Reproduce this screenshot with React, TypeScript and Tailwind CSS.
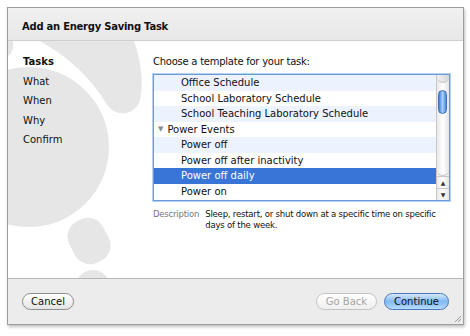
import React from "react";

const font = { fontFamily: '"DejaVu Sans", Verdana, sans-serif' };

function Watermark() {
  return (
    <svg className="absolute inset-0" width="454" height="237" viewBox="0 0 454 237">
      <g fill="#e6e6e6" transform="translate(-8 -41)">
        <circle cx="29" cy="147" r="80" />
        <path d="M40 41 L134 41 C141 60 144 84 140 100 C136 114 120 117 111 109 C106 104 104 100 100 94 C85 72 64 55 40 41 Z" />
        <path d="M8 41 L13 41 C14 48 12 54 8 56 Z" />
        <rect x="70" y="218" width="38" height="46" rx="17" transform="rotate(-28 89 241)" />
        <circle cx="93" cy="287" r="17" />
      </g>
    </svg>
  );
}

function Scrollbar() {
  return (
    <div className="w-[13px] h-full border-l border-[#c8c8c8] bg-gradient-to-r from-[#e9e9e9] via-[#ffffff] to-[#e3e3e3] flex flex-col">
      <div className="h-[8px] rounded-b-full border-b border-[#c4c4c4] bg-gradient-to-r from-[#f0f0f0] to-[#d8d8d8]" />
      <div className="flex-1 relative">
        <div className="absolute left-[1px] top-[7px] w-[9px] h-[24px] rounded-full border border-[#3f6fb0] bg-gradient-to-r from-[#3d7fd6] via-[#a9d0fb] to-[#4a8ae0]" />
        <div className="absolute left-0 right-0 bottom-0 h-[8px] rounded-b-full border-b border-[#c4c4c4]" />
      </div>
      <div className="h-[12px] flex items-center justify-center border-t border-[#c8c8c8] text-[6px] text-[#333]">▲</div>
      <div className="h-[12px] flex items-center justify-center border-t border-[#c8c8c8] text-[6px] text-[#333]">▼</div>
    </div>
  );
}

export default function App() {
  const rows = [
    { label: "Office Schedule", indent: true },
    { label: "School Laboratory Schedule", indent: true },
    { label: "School Teaching Laboratory Schedule", indent: true },
    { label: "Power Events", group: true },
    { label: "Power off", indent: true },
    { label: "Power off after inactivity", indent: true },
    { label: "Power off daily", indent: true, selected: true },
    { label: "Power on", indent: true },
  ];
  const steps = ["Tasks", "What", "When", "Why", "Confirm"];

  return (
    <div className="w-[470px] h-[336px] bg-white pt-[7px] pl-[7px]" style={font}>
      <div className="w-[457px] h-[318px] flex flex-col border border-[#9d9d9d] shadow-[1px_2px_3px_rgba(0,0,0,0.25)] text-[10px] text-[#111]">
        <div className="h-[33px] bg-gradient-to-b from-[#f0f0f0] to-[#e8e8e8] border-b border-[#cfcfcf] flex items-end pl-[14px] pb-[6px]">
          <span className="font-bold text-[10px] tracking-[-0.25px]">Add an Energy Saving Task</span>
        </div>

        <div className="flex-1 relative bg-white overflow-hidden flex">
          <Watermark />
          <div className="relative w-[145px] pl-[15px] pt-[14px] flex flex-col gap-[6.5px]">
            {steps.map((s, i) => (
              <div key={s} className={`h-[13px] leading-[13px] ${i === 0 ? "font-bold" : ""}`}>
                {s}
              </div>
            ))}
          </div>
          <div className="relative flex-1 pt-[14px] pr-[13px]">
            <div className="h-[13px] leading-[13px] tracking-[-0.25px]">Choose a template for your task:</div>
            <div className="mt-[6px] h-[127px] border border-[#6d9ad8] shadow-[0_0_0_1px_#b7cff1] flex">
              <div className="flex-1 flex flex-col">
                {rows.map((r, i) => (
                  <div
                    key={r.label}
                    className={`h-[15.5px] flex items-center ${
                      r.selected ? "bg-[#3875d7] text-white" : i % 2 === 0 ? "bg-[#edf3fe]" : "bg-white"
                    } ${r.group ? "pl-[4px]" : "pl-[27px]"}`}
                  >
                    {r.group && <span className="text-[7px] text-[#8a8a8a] mr-[4px]">▼</span>}
                    {r.label}
                  </div>
                ))}
              </div>
              <Scrollbar />
            </div>
            <div className="mt-[8px] flex gap-[6px] leading-[11px] text-[8.5px] tracking-[-0.2px]">
              <span className="text-[#777]">Description</span>
              <span className="whitespace-nowrap">
                Sleep, restart, or shut down at a specific time on specific
                <br />
                days of the week.
              </span>
            </div>
          </div>
        </div>

        <div className="h-[46px] bg-[#ececec] border-t border-[#b5b5b5] flex items-center px-[14px] relative">
          <button className="h-[17px] w-[52px] rounded-full border border-[#8d8d8d] bg-gradient-to-b from-white to-[#e4e4e4] text-[10px] leading-none">
            Cancel
          </button>
          <div className="flex-1" />
          <button className="h-[17px] w-[61px] rounded-full border border-[#c3c3c3] bg-gradient-to-b from-white to-[#efefef] text-[10px] text-[#a5a5a5] leading-none">
            Go Back
          </button>
          <button className="ml-[7px] h-[17px] w-[65px] rounded-full border border-[#4a78bd] bg-gradient-to-b from-[#d6e9fc] via-[#7fb9f3] to-[#b8dcfb] text-[10px] leading-none">
            Continue
          </button>
          <svg className="absolute right-[1px] bottom-[1px]" width="9" height="9" viewBox="0 0 9 9">
            <path d="M8 2 L2 8 M8 5 L5 8" stroke="#999" strokeWidth="1" />
          </svg>
        </div>
      </div>
    </div>
  );
}
